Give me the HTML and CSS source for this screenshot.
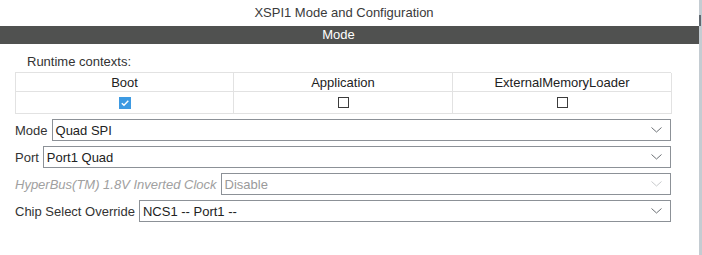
FILE: index.html
```html
<!DOCTYPE html>
<html>
<head>
<meta charset="utf-8">
<link rel="stylesheet" href="styles.css">
</head>
<body>
<div class="frame">
  <div class="panel">
    <div class="title">XSPI1 Mode and Configuration</div>
    <div class="bar">Mode</div>
    <div class="content">
      <div class="rc-label">Runtime contexts:</div>
      <div class="ctx">
        <div class="cell head">Boot</div>
        <div class="cell head">Application</div>
        <div class="cell head">ExternalMemoryLoader</div>
        <div class="cell"><span class="cb checked"><svg viewBox="0 0 12 12" width="12" height="12"><path d="M2.8 6.2 L5 8.3 L9.3 3.8" fill="none" stroke="#fff" stroke-width="1.4"/></svg></span></div>
        <div class="cell"><span class="cb"></span></div>
        <div class="cell"><span class="cb"></span></div>
      </div>
      <div class="rows">
        <div class="row"><span class="lbl">Mode</span><div class="sel"><span>Quad SPI</span><svg class="chev" viewBox="0 0 11 6" width="11" height="6"><path d="M0.5 0.5 L5.5 5 L10.5 0.5" fill="none" stroke="#6c7075" stroke-width="1"/></svg></div></div>
        <div class="row"><span class="lbl">Port</span><div class="sel"><span>Port1 Quad</span><svg class="chev" viewBox="0 0 11 6" width="11" height="6"><path d="M0.5 0.5 L5.5 5 L10.5 0.5" fill="none" stroke="#6c7075" stroke-width="1"/></svg></div></div>
        <div class="row"><span class="lbl dis">HyperBus(TM) 1.8V Inverted Clock</span><div class="sel dis"><span>Disable</span><svg class="chev" viewBox="0 0 11 6" width="11" height="6"><path d="M0.5 0.5 L5.5 5 L10.5 0.5" fill="none" stroke="#c8cacc" stroke-width="1"/></svg></div></div>
        <div class="row"><span class="lbl">Chip Select Override</span><div class="sel"><span>NCS1 -- Port1 --</span><svg class="chev" viewBox="0 0 11 6" width="11" height="6"><path d="M0.5 0.5 L5.5 5 L10.5 0.5" fill="none" stroke="#6c7075" stroke-width="1"/></svg></div></div>
      </div>
    </div>
  </div>
  <div class="scroll"><div class="thumb"></div></div>
</div>
</body>
</html>
```

FILE: styles.css
```css
html, body {
  margin: 0;
  padding: 0;
  background: #fff;
}
body {
  font-family: "Liberation Sans", Arial, sans-serif;
  font-size: 13px;
  color: #333;
}
.frame {
  display: flex;
  width: 702px;
  height: 255px;
}
.panel {
  width: 699px;
  flex: none;
}
.title {
  height: 26px;
  line-height: 26px;
  text-align: center;
  padding-right: 11px;
  color: #3a3a3a;
}
.bar {
  height: 18px;
  line-height: 18px;
  background: #505150;
  color: #fff;
  text-align: center;
  padding-right: 22px;
}
.content {
  padding-top: 12px;
}
.rc-label {
  padding-left: 27px;
  height: 16px;
  line-height: 12px;
}
.ctx {
  margin-left: 15px;
  width: 656px;
  display: grid;
  grid-template-columns: 218px 219px 219px;
  grid-template-rows: 19px 22px;
  border-top: 1px solid #e2e2e2;
  border-left: 1px solid #e2e2e2;
  box-sizing: border-box;
}
.cell {
  border-right: 1px solid #e2e2e2;
  border-bottom: 1px solid #e2e2e2;
  display: flex;
  align-items: center;
  justify-content: center;
  color: #222;
}
.cb {
  width: 11px;
  height: 11px;
  border: 1px solid #3c3c3c;
  box-sizing: border-box;
  display: block;
}
.cb.checked {
  width: 12px;
  height: 12px;
  border: none;
  background: #3d9ae2;
}
.cb svg {
  display: block;
}
.rows {
  display: flex;
  flex-direction: column;
  gap: 5px;
  margin-top: 5px;
  padding-left: 15px;
}
.row {
  display: flex;
  align-items: center;
  height: 22px;
  width: 656px;
}
.lbl {
  margin-right: 4px;
  white-space: nowrap;
  color: #333;
}
.lbl.dis {
  font-style: italic;
  color: #a0a0a0;
}
.sel {
  flex: 1;
  height: 22px;
  box-sizing: border-box;
  border: 1px solid #8c9197;
  display: flex;
  align-items: center;
  padding: 0 8px 0 3px;
  color: #222;
}
.sel span {
  flex: 1;
  white-space: nowrap;
}
.sel.dis {
  color: #9a9a9a;
}
.chev {
  display: block;
}
.scroll {
  width: 3px;
  background: #c4ccd2;
  position: relative;
}
.thumb {
  position: absolute;
  left: 0;
  top: 15px;
  width: 2px;
  height: 11px;
  background: #606870;
}
```
